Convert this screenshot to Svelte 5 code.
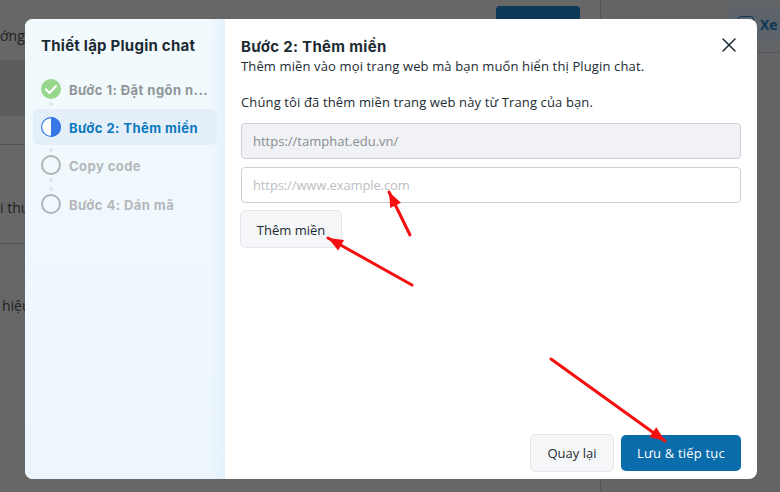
<script>
    let steps = [
        { label: 'Bước 1: Đặt ngôn n...', state: 'done' },
        { label: 'Bước 2: Thêm miền', state: 'active' },
        { label: 'Copy code', state: 'todo' },
        { label: 'Bước 4: Dán mã', state: 'todo' }
    ]

    let arrows = [
        { x1: 410, y1: 235, x2: 389, y2: 192 },
        { x1: 412, y1: 285, x2: 328, y2: 238 },
        { x1: 551, y1: 359, x2: 665, y2: 441 }
    ]

    const head = (a) => {
        const ang = Math.atan2(a.y2 - a.y1, a.x2 - a.x1)
        const pt = (d, w) => {
            const x = a.x2 - Math.cos(ang) * d - Math.sin(ang) * w
            const y = a.y2 - Math.sin(ang) * d + Math.cos(ang) * w
            return x + ',' + y
        }
        return [a.x2 + ',' + a.y2, pt(15, 6), pt(15, -6)].join(' ')
    }
</script>

<div class="page">
    <div class="back">
        <div class="back-main">
            <div class="back-top">
                <span class="back-text top-word">ớng</span>
                <div class="back-btn"></div>
            </div>
            <div class="back-band"></div>
            <div class="back-row row-a"></div>
            <div class="back-row row-b"><span class="back-text">i thu</span></div>
            <div class="back-row row-c"><span class="back-text hieu">hiệu</span></div>
        </div>
        <div class="back-side">
            <div class="side-head">
                <div class="side-pill"><span class="side-box"></span><span class="side-text">Xe</span></div>
            </div>
        </div>
    </div>

    <div class="modal">
        <aside class="sidebar">
            <h2>Thiết lập Plugin chat</h2>
            <div class="steps">
                {#each steps as s, i}
                    {#if i > 0}
                        <div class="dots">
                            <span></span>
                            {#if i === 3}<span></span>{/if}
                        </div>
                    {/if}
                    <div class="step {s.state}">
                        <span class="icon">
                            {#if s.state === 'done'}
                                <svg width="20" height="20" viewBox="0 0 20 20">
                                    <circle cx="10" cy="10" r="10" fill="#97d68b" />
                                    <path d="M5 10.5l3.4 3.4L15 7" fill="none" stroke="#fff" stroke-width="2.2" stroke-linecap="round" stroke-linejoin="round" />
                                </svg>
                            {:else if s.state === 'active'}
                                <svg width="20" height="20" viewBox="0 0 20 20">
                                    <circle cx="10" cy="10" r="9.4" fill="#fff" stroke="#3578e5" stroke-width="1.2" />
                                    <path d="M10 0a10 10 0 0 1 0 20z" fill="#3578e5" />
                                </svg>
                            {:else}
                                <svg width="20" height="20" viewBox="0 0 20 20">
                                    <circle cx="10" cy="10" r="9" fill="none" stroke="#b1b4b7" stroke-width="2" />
                                </svg>
                            {/if}
                        </span>
                        <span class="label">{s.label}</span>
                    </div>
                {/each}
            </div>
        </aside>

        <section class="content">
            <button class="close" aria-label="Đóng">
                <svg width="14" height="14" viewBox="0 0 14 14">
                    <path d="M1 1l12 12M13 1L1 13" stroke="#1c2b33" stroke-width="1.5" stroke-linecap="round" />
                </svg>
            </button>
            <h3>Bước 2: Thêm miền</h3>
            <p class="sub">Thêm miền vào mọi trang web mà bạn muốn hiển thị Plugin chat.</p>
            <p class="note">Chúng tôi đã thêm miền trang web này từ Trang của bạn.</p>
            <input class="field" value="https://tamphat.edu.vn/" disabled />
            <input class="field empty" placeholder="https://www.example.com" />
            <button class="btn add">Thêm miền</button>
            <div class="footer">
                <button class="btn back-btn-2">Quay lại</button>
                <button class="btn primary">Lưu &amp; tiếp tục</button>
            </div>
        </section>
    </div>

    <svg class="arrows" width="780" height="492">
        {#each arrows as a}
            <line x1={a.x1} y1={a.y1} x2={a.x2} y2={a.y2} stroke="#f50f0f" stroke-width="3" stroke-linecap="round" />
            <polygon points={head(a)} fill="#f50f0f" />
        {/each}
    </svg>
</div>

<style>
    :global(body){
        margin: 0;
        background: #666;
    }
    .page{
        position: relative;
        width: 780px;
        height: 492px;
        overflow: hidden;
        font-family: "Open Sans", "Noto Sans", sans-serif;
        color: #1c2b33;
    }
    .back{
        display: flex;
        height: 100%;
        background: #676767;
    }
    .back-main{
        width: 600px;
        border-right: 1px solid #565656;
    }
    .back-top{
        height: 60px;
        position: relative;
    }
    .back-text{
        font-size: 14px;
        color: #1f1f1f;
    }
    .top-word{
        position: absolute;
        left: 0;
        top: 26px;
    }
    .back-btn{
        position: absolute;
        left: 496px;
        top: 6px;
        width: 84px;
        height: 30px;
        border-radius: 4px;
        background: #0d3856;
    }
    .back-band{
        height: 56px;
        background: #5c5c5c;
    }
    .back-row{
        border-bottom: 1px solid #505050;
    }
    .row-a{
        height: 28px;
    }
    .row-b{
        padding-top: 51px;
        box-sizing: border-box;
        height: 99px;
    }
    .row-c{
        border: 0;
        padding-top: 50px;
    }
    .hieu{
        margin-left: 2px;
    }
    .back-side{
        flex: 1;
        background: #636466;
    }
    .side-head{
        height: 53px;
        padding-top: 7px;
        box-sizing: border-box;
        border-bottom: 1px solid #54565a;
    }
    .side-pill{
        display: flex;
        align-items: center;
        margin-left: 127px;
        height: 34px;
        padding-left: 10px;
        gap: 6px;
        background: #5e636b;
    }
    .side-box{
        width: 14px;
        height: 14px;
        border: 1px solid #0d3856;
        border-radius: 3px;
    }
    .side-text{
        font-size: 14px;
        font-weight: 700;
        color: #0d3856;
    }

    .modal{
        position: absolute;
        left: 25px;
        top: 19px;
        width: 732px;
        height: 460px;
        display: flex;
        border-radius: 8px;
        overflow: hidden;
        background: #fff;
    }
    .sidebar{
        width: 200px;
        flex-shrink: 0;
        box-sizing: border-box;
        padding: 17px 8px 0;
        background: linear-gradient(90deg, rgba(220,238,250,0) 92%, #e2f1fb 100%), linear-gradient(180deg, #f2fafd 0%, #edf6fd 100%);
    }
    h2{
        margin: 0 0 23px 8px;
        font-family: "Inter", sans-serif;
        font-size: 15px;
        line-height: 20px;
        font-weight: 700;
        letter-spacing: 0.24px;
        white-space: nowrap;
        color: #1c2b33;
    }
    .steps{
        display: flex;
        flex-direction: column;
    }
    .step{
        display: flex;
        align-items: center;
        gap: 8px;
        height: 20px;
        padding: 0 8px;
        font-family: "Inter", sans-serif;
        font-size: 13px;
        font-weight: 700;
        letter-spacing: 0.45px;
    }
    .step.active{
        height: 36px;
        border-radius: 6px;
        background: #e4eff9;
    }
    .icon{
        display: flex;
        flex-shrink: 0;
    }
    .label{
        margin-top: 2px;
        white-space: nowrap;
    }
    .done .label{
        color: #8f9498;
    }
    .active .label{
        color: #0a78be;
    }
    .todo .label{
        color: #b4b7ba;
    }
    .dots{
        display: flex;
        flex-direction: column;
        align-items: center;
        gap: 5px;
        width: 4px;
        padding: 3px 0;
        margin-left: 16px;
    }
    .dots span{
        width: 4px;
        height: 4px;
        border-radius: 50%;
        background: #e1e7ea;
    }

    .content{
        position: relative;
        flex: 1;
        box-sizing: border-box;
        padding: 18px 16px 7px;
        display: flex;
        flex-direction: column;
        align-items: flex-start;
        font-size: 13px;
    }
    .close{
        position: absolute;
        top: 19px;
        right: 21px;
        padding: 0;
        border: 0;
        display: flex;
        background: none;
    }
    h3{
        margin: 0;
        font-family: "Inter", sans-serif;
        font-size: 15px;
        line-height: 19px;
        font-weight: 700;
        letter-spacing: 0.32px;
    }
    p{
        margin: 0;
        line-height: 20px;
        letter-spacing: 0.13px;
        white-space: nowrap;
    }
    .note{
        margin-top: 16px;
        margin-bottom: 11px;
    }
    .field{
        box-sizing: border-box;
        width: 500px;
        height: 36px;
        padding: 0 11px;
        margin-bottom: 8px;
        border: 1px solid #ccd0d5;
        border-radius: 4px;
        font: inherit;
        background: #fff;
        color: #8a8d91;
    }
    .field:disabled{
        background: #f0f2f5;
    }
    .field::placeholder{
        color: #bcc0c4;
        letter-spacing: -0.12px;
    }
    .btn{
        box-sizing: border-box;
        height: 38px;
        border-radius: 5px;
        border: 1px solid #e4e6eb;
        background: #f5f6f7;
        font: inherit;
        color: #1c2b33;
    }
    .add{
        width: 102px;
        margin-top: -1px;
        margin-left: -1px;
        padding-top: 2px;
    }
    .footer{
        margin-top: auto;
        align-self: flex-end;
        display: flex;
        gap: 7px;
        align-items: center;
    }
    .back-btn-2{
        width: 84px;
    }
    .primary{
        width: 120px;
        height: 36px;
        border: 0;
        background: #0a6cab;
        color: #fff;
        letter-spacing: 0.2px;
    }
    .arrows{
        position: absolute;
        left: 0;
        top: 0;
        pointer-events: none;
    }
</style>
